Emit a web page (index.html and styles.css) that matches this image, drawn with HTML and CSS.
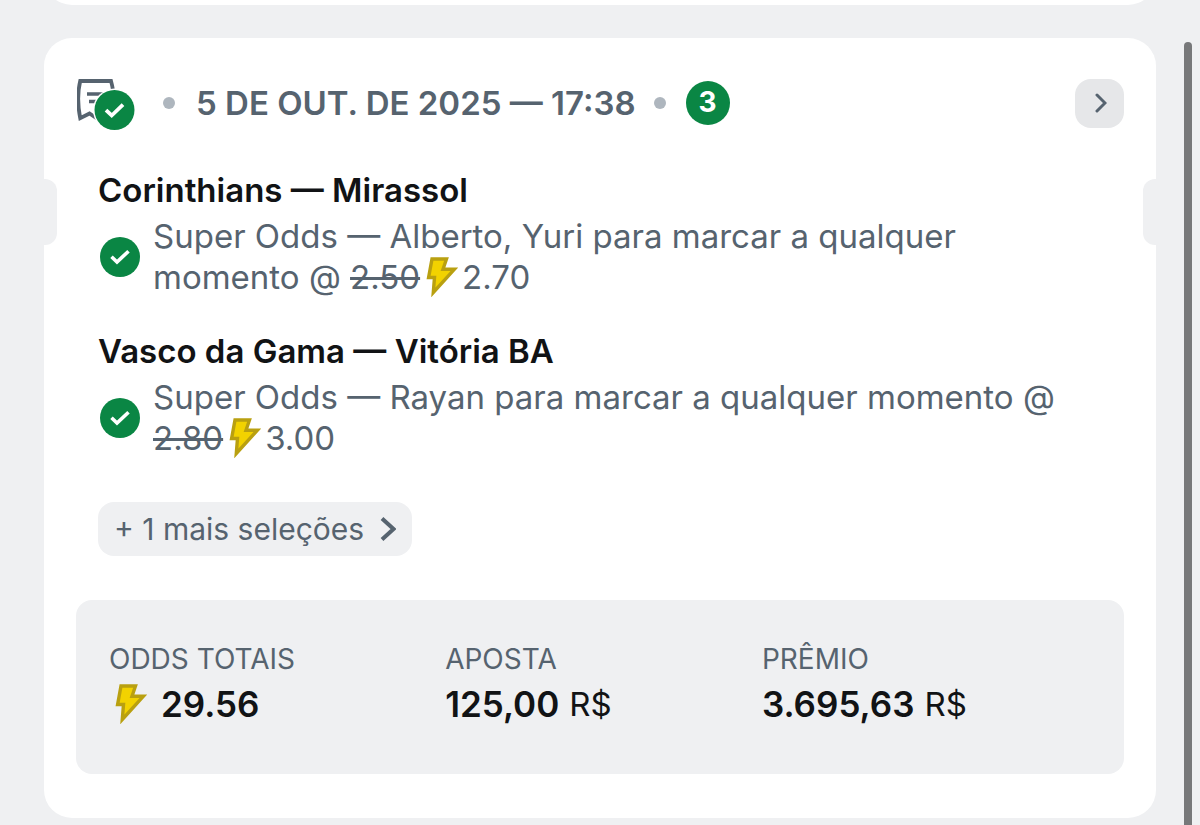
FILE: index.html
```html
<!DOCTYPE html>
<html lang="pt-BR">

<head>
    <meta charset="UTF-8">
    <meta name="viewport" content="width=device-width, initial-scale=1.0">
    <title>Apostas</title>
    <link rel="stylesheet" href="styles.css">
</head>

<body>
    <svg class="sprite" aria-hidden="true">
        <symbol id="check" viewBox="0 0 40 40">
            <circle cx="20" cy="20" r="20" fill="#0a8644" />
            <path d="M11.5 19.8l5.5 5.2L28.5 14.200" fill="none" stroke="#fff" stroke-width="3.6" />
        </symbol>
        <symbol id="bolt" viewBox="0 0 32 40">
            <path d="M6 2H20.5l-3.5 10.3h11.3L7.3 35.5 8.5 20.5H2.6z" fill="#f2d200" stroke="#b9a010" stroke-width="3.4" />
        </symbol>
        <symbol id="chevron" viewBox="0 0 16 24">
            <path d="M2 1.500l11.500 10.500-11.500 10.500" fill="none" stroke="currentColor" stroke-width="4" />
        </symbol>
    </svg>

    <main class="feed">
        <div class="card-previous"></div>
        <article class="card">
            <header class="card-header">
                <svg class="ticket-icon" viewBox="0 0 58 52">
                    <path d="M3.2 2H34Q37 13 36.5 20L36 39.5 28.5 34.5 20 39.5 12.5 34.5 3.2 39.2Q-.8 19 3.2 2z" fill="none" stroke="#56636f" stroke-width="3.8" />
                    <path d="M10 15h17M12 22.5h12" fill="none" stroke="#56636f" stroke-width="3.5" />
                    <circle cx="37.5" cy="31" r="21.5" fill="#fff" />
                    <circle cx="37.5" cy="31" r="20" fill="#0a8644" />
                    <path d="M29 31.2l5.7 5.3L46 25.7" fill="none" stroke="#fff" stroke-width="3.8" />
                </svg>
                <span class="dot"></span>
                <time class="date" datetime="2025-10-05T17:38">5 DE OUT. DE 2025 — 17:38</time>
                <span class="dot"></span>
                <span class="count">3</span>
                <button class="open" type="button" aria-label="Abrir aposta">
                    <svg class="open-icon" viewBox="0 0 12 20">
                        <path d="M2 2l8 8-8 8" fill="none" stroke="currentColor" stroke-width="3" stroke-linecap="round" />
                    </svg>
                </button>
            </header>

            <section class="selections">
                <div class="selection">
                    <h2 class="match">Corinthians — Mirassol</h2>
                    <div class="pick">
                        <svg class="check"><use href="#check" /></svg>
                        <p class="pick-text">Super Odds — Alberto, Yuri para marcar a qualquer momento @ <span class="odds"><s>2.50</s><svg class="bolt"><use href="#bolt" /></svg><span>2.70</span></span></p>
                    </div>
                </div>
                <div class="selection">
                    <h2 class="match">Vasco da Gama — Vitória BA</h2>
                    <div class="pick">
                        <svg class="check"><use href="#check" /></svg>
                        <p class="pick-text">Super Odds — Rayan para marcar a qualquer momento @ <span class="odds"><s>2.80</s><svg class="bolt"><use href="#bolt" /></svg><span>3.00</span></span></p>
                    </div>
                </div>
                <button class="more" type="button">
                    + 1 mais seleções
                    <svg class="more-icon"><use href="#chevron" /></svg>
                </button>
            </section>

            <dl class="summary">
                <div class="total">
                    <dt>ODDS TOTAIS</dt>
                    <dd><svg class="bolt"><use href="#bolt" /></svg><b>29.56</b></dd>
                </div>
                <div class="total">
                    <dt>APOSTA</dt>
                    <dd><b>125,00</b> <span class="currency">R$</span></dd>
                </div>
                <div class="total">
                    <dt>PRÊMIO</dt>
                    <dd><b>3.695,63</b> <span class="currency">R$</span></dd>
                </div>
            </dl>
        </article>
    </main>
    <div class="scrollbar"></div>
</body>

</html>
```
FILE: styles.css
```css
* {
    box-sizing: border-box;
    margin: 0;
    padding: 0;
}

body {
    height: 100vh;
    overflow: hidden;
    background: #eff0f2;
    color: #111315;
    font-family: Inter, "Liberation Sans", sans-serif;
    font-size: 33px;
}

button {
    border: none;
    font-family: inherit;
    color: #56636f;
    cursor: pointer;
}

.sprite {
    position: absolute;
    width: 0;
    height: 0;
}

.feed {
    display: flex;
    flex-direction: column;
    gap: 33px;
    padding: 0 44px 32px;
}

/* scrolled almost out of view */
.card-previous {
    height: 60px;
    margin-top: -55px;
    border-radius: 28px;
    background: #fff;
}

.card {
    position: relative;
    padding: 40px 32px 44px;
    border-radius: 28px;
    background: #fff;
}

/* ticket notches on both sides */
.card::before,
.card::after {
    content: "";
    position: absolute;
    top: 141px;
    width: 13px;
    height: 66px;
    background: #eff0f2;
}

.card::before {
    left: 0;
    border-radius: 0 12px 12px 0;
}

.card::after {
    right: 0;
    border-radius: 12px 0 0 12px;
}

.card-header {
    display: flex;
    align-items: center;
    height: 50px;
    padding-left: 1px;
}

.ticket-icon {
    width: 58px;
    height: 52px;
    margin: 4px 28px 0 0;
}

.dot {
    width: 12px;
    height: 12px;
    border-radius: 50%;
    background: #aeb6be;
}

.date {
    margin: 0 18px 0 21px;
    font-weight: 600;
    color: #56636f;
}

.count {
    width: 44px;
    height: 44px;
    margin-left: 20px;
    border-radius: 50%;
    background: #0a8644;
    color: #fff;
    font-size: 28px;
    font-weight: 700;
    line-height: 42px;
    text-align: center;
}

.open {
    display: flex;
    align-items: center;
    justify-content: center;
    width: 49px;
    height: 49px;
    margin-left: auto;
    border-radius: 16px;
    background: #e6e7e9;
}

.open-icon {
    width: 12px;
    height: 20px;
    margin-left: 3px;
}

.selections {
    padding: 42px 22px 44px;
}

.selection {
    margin-bottom: 33px;
}

.match {
    margin-bottom: 6px;
    font-size: 33px;
    font-weight: 600;
    line-height: 40px;
}

.pick {
    display: flex;
    align-items: center;
    gap: 13px;
    padding-left: 2px;
}

.check {
    flex: none;
    width: 40px;
    height: 40px;
}

.pick-text {
    color: #56636f;
    line-height: 41px;
}

.odds {
    display: inline-flex;
    vertical-align: top;
}

.odds s {
    text-decoration-thickness: 3px;
}

.bolt {
    width: 32px;
    height: 40px;
    margin: 0 6px;
}

.odds .bolt {
    margin: 0 4px 0 6px;
}

.more {
    display: flex;
    align-items: center;
    gap: 16px;
    height: 54px;
    margin-top: 43px;
    padding: 0 16px;
    border-radius: 16px;
    background: #eff0f2;
    font-size: 30px;
}

.more-icon {
    width: 16px;
    height: 24px;
}

.summary {
    display: flex;
    padding: 41px 40px 43px 0;
    border-radius: 16px;
    background: #eff0f2;
}

.total {
    flex: 1 1 auto;
    padding-left: 33px;
}

.total dt {
    color: #56636f;
    font-size: 28px;
    line-height: 36px;
}

.total dd {
    display: flex;
    align-items: center;
    height: 54px;
    font-size: 35px;
}

.total b {
    font-weight: 600;
}

.total .bolt {
    margin-right: 14px;
}

.currency {
    margin-left: 10px;
    font-size: 33px;
}

.scrollbar {
    position: fixed;
    top: 42px;
    right: 8px;
    bottom: -8px;
    width: 8px;
    border-radius: 4px;
    background: #77787a;
}
```
